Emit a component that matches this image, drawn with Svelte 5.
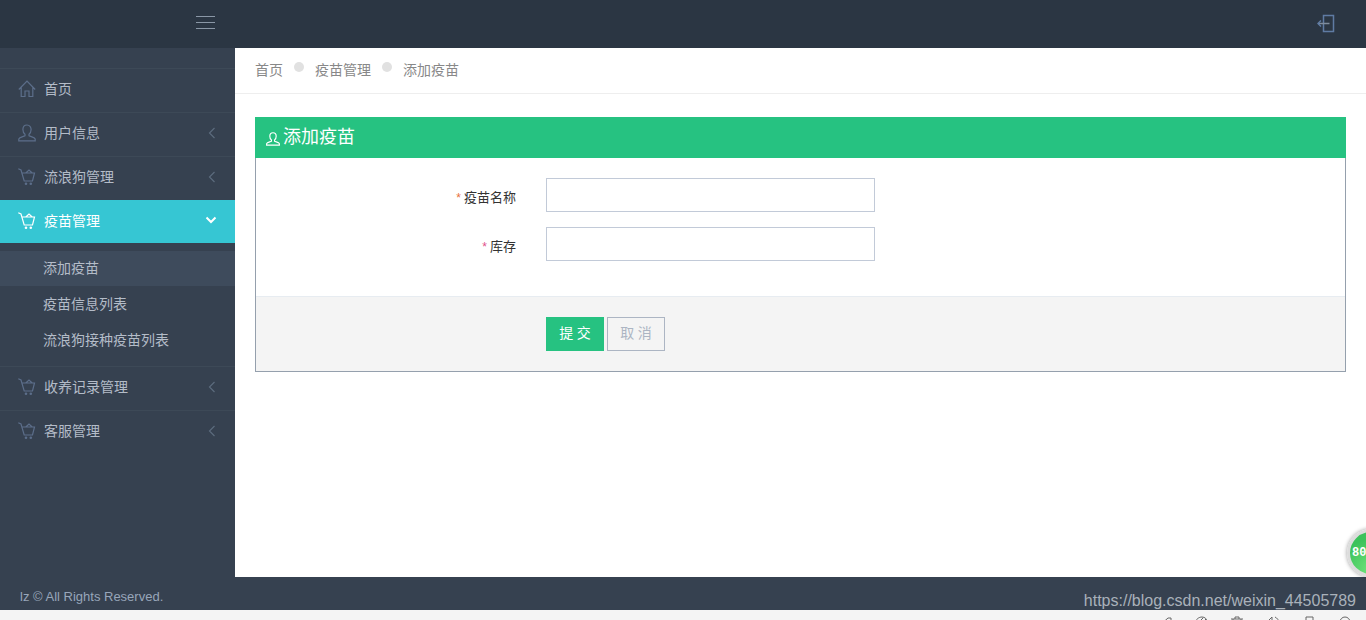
<script>
  const menu = [
    { label: "首页", icon: "home" },
    { label: "用户信息", icon: "user", arrow: true },
    { label: "流浪狗管理", icon: "cart", arrow: true },
    {
      label: "疫苗管理",
      icon: "cart",
      open: true,
      children: ["添加疫苗", "疫苗信息列表", "流浪狗接种疫苗列表"],
    },
    { label: "收养记录管理", icon: "cart", arrow: true },
    { label: "客服管理", icon: "cart", arrow: true },
  ];
</script>

{#snippet icon(name)}
  <svg class="icon" viewBox="0 0 18 18" width="18" height="18" fill="none" stroke="currentColor" stroke-width="1.200">
    {#if name === "home"}
      <path d="M0.800 9.500 9 1 17.200 9.500M3.200 7V16.500H7V11H11V16.500H14.800V7" />
    {:else if name === "user"}
      <path d="M9 1C6.400 1 4.900 3 4.900 5.600 4.900 7.900 5.800 9.400 7 10.300V11.800C5 12.800 1.400 13.200 0.800 15V16.800H17.200V15C16.600 13.200 13 12.800 11 11.800V10.300C12.200 9.400 13.100 7.900 13.100 5.600 13.100 3 11.600 1 9 1Z" />
    {:else}
      <path d="M0.300 0.800 3 2 6.200 13H14.500L16.500 5H4.300M7.800 5 11 2 14.200 5" />
      <circle cx="8" cy="15.800" r="1.300" fill="currentColor" stroke="none" />
      <circle cx="12.800" cy="15.800" r="1.300" fill="currentColor" stroke="none" />
    {/if}
  </svg>
{/snippet}

<div class="page">
  <header class="topbar">
    <div class="brand">
      <div class="burger"><i></i><i></i><i></i></div>
    </div>
    <svg class="logout" viewBox="0 0 20 20" width="20" height="20" fill="none" stroke-width="1.500">
      <path d="M6.500 1.500H16.500V17.500H6.500Z" stroke="#5f7ba3" />
      <path d="M1 9.500H12.500" stroke="#7f8c9c" />
      <path d="M4 6.500 1 9.500 4 12.500" stroke="#5f7ba3" />
    </svg>
  </header>

  <div class="body">
    <aside class="sidebar">
      <ul class="menu">
        {#each menu as item}
          <li class="item" class:open={item.open}>
            <div class="link">
              {@render icon(item.icon)}
              <span class="title">{item.label}</span>
              {#if item.arrow}
                <svg class="arrow" viewBox="0 0 8 12" width="8" height="12" fill="none" stroke="currentColor" stroke-width="1.200"><path d="M6.500 1 1.500 6 6.500 11" /></svg>
              {:else if item.open}
                <svg class="arrow down" viewBox="0 0 12 8" width="12" height="8" fill="none" stroke="currentColor" stroke-width="2"><path d="M1.500 1.500 6 6 10.500 1.500" /></svg>
              {/if}
            </div>
            {#if item.children}
              <ul class="sub">
                {#each item.children as child, i}
                  <li class:current={i === 0}>{child}</li>
                {/each}
              </ul>
            {/if}
          </li>
        {/each}
      </ul>
    </aside>

    <main class="content">
      <nav class="crumbs">
        <span>首页</span><b class="dot"></b>
        <span>疫苗管理</span><b class="dot"></b>
        <span>添加疫苗</span>
      </nav>

      <section class="panel">
        <h2 class="panel-title">
          <svg viewBox="0 0 18 18" width="14" height="14" fill="none" stroke="currentColor" stroke-width="1.500">
            <path d="M9 1C6.400 1 4.900 3 4.900 5.600 4.900 7.900 5.800 9.400 7 10.300V11.800C5 12.800 1.400 13.200 0.800 15V16.800H17.200V15C16.600 13.200 13 12.800 11 11.800V10.300C12.200 9.400 13.100 7.900 13.100 5.600 13.100 3 11.600 1 9 1Z" />
          </svg>
          添加疫苗
        </h2>
        <form class="form">
          <div class="row">
            <label for="vname"><em class="orange">*</em>疫苗名称</label>
            <input id="vname" type="text" />
          </div>
          <div class="row">
            <label for="stock"><em>*</em>库存</label>
            <input id="stock" type="text" />
          </div>
        </form>
        <div class="actions">
          <button class="submit" type="button">提 交</button>
          <button class="cancel" type="button">取 消</button>
        </div>
      </section>
    </main>
  </div>

  <footer class="footer">
    <span class="copy">lz © All Rights Reserved.</span>
    <span class="mark">https://blog.csdn.net/weixin_44505789</span>
  </footer>
  <div class="strip">
    <svg viewBox="0 0 14 14" width="14" height="14"><path d="M1 10 10 2H13V12M6 6V14" /></svg>
    <svg viewBox="0 0 14 14" width="14" height="14"><path d="M1 7C2 3 5 1 8 1 11 1 13 3 13 6M5 6 9 2M8 7 12 3" /></svg>
    <svg viewBox="0 0 14 14" width="14" height="14"><path d="M1 3H13M5 3V1H9V3M3 3V14M11 3V14" /></svg>
    <svg viewBox="0 0 14 14" width="14" height="14"><path d="M1 6 6 1V14M9 1 C11 2 13 4 13 7" /></svg>
    <svg viewBox="0 0 14 14" width="14" height="14"><path d="M4 1H11V14M4 1V14M0 6H4" /></svg>
    <svg viewBox="0 0 14 14" width="14" height="14"><circle cx="7" cy="6" r="5" /></svg>
  </div>

  <div class="ball"><span>80</span></div>
</div>

<style>
  :global(body) {
    margin: 0;
    background: #fff;
    overflow: hidden;
  }

  .page {
    height: 620px;
    display: flex;
    flex-direction: column;
    font-family: "Open Sans", "Liberation Sans", "Noto Sans CJK SC", sans-serif;
    font-size: 14px;
    position: relative;
    overflow: hidden;
  }

  .topbar {
    height: 48px;
    flex: none;
    background: #2b3643;
    display: flex;
    align-items: center;
    justify-content: space-between;
    padding-right: 29px;
  }

  .brand {
    width: 235px;
    display: flex;
    justify-content: flex-end;
    padding-bottom: 3px;
  }

  .burger {
    width: 19px;
    margin-right: 20px;
    display: flex;
    flex-direction: column;
    gap: 5px;
  }

  .burger i {
    display: block;
    height: 1px;
    background: #8a97a6;
  }

  .body {
    flex: 1;
    display: flex;
    min-height: 0;
  }

  .sidebar {
    width: 235px;
    flex: none;
    background: #364150;
    padding-top: 20px;
  }

  .menu,
  .sub {
    list-style: none;
    margin: 0;
    padding: 0;
  }

  .item {
    border-top: 1px solid #3d4957;
  }

  .link {
    height: 43px;
    box-sizing: border-box;
    display: flex;
    align-items: center;
    padding: 0 17px 3px 18px;
    color: #b4bcc8;
    font-size: 14px;
  }

  .icon {
    color: #5c6e8a;
    flex: none;
    margin: 0 8px 0 0;
  }

  .title {
    flex: 1;
    line-height: 1;
  }

  .arrow {
    color: #5c6b7d;
    margin-right: 2px;
  }

  .open {
    border-top: none;
  }

  .open .link {
    background: #36c6d3;
    color: #fff;
    padding-bottom: 2px;
  }

  .open .icon,
  .open .arrow {
    color: #fff;
  }

  .arrow.down {
    margin-right: 1px;
    margin-bottom: 2px;
  }

  .sub {
    padding: 8px 0 7px;
  }

  .sub li {
    height: 35px;
    box-sizing: border-box;
    line-height: 33px;
    margin-bottom: 1px;
    padding-left: 43px;
    color: #b4bcc8;
  }

  .sub li.current {
    background: #3e4b5c;
  }

  .content {
    flex: 1;
    background: #fff;
    min-width: 0;
  }

  .crumbs {
    height: 41px;
    padding: 0 0 4px 20px;
    border-bottom: 1px solid #eee;
    display: flex;
    align-items: center;
    color: #888;
    gap: 11px;
  }

  .dot {
    width: 10px;
    height: 10px;
    border-radius: 50%;
    background: #e1e1e1;
    margin-top: -3px;
  }

  .panel {
    margin: 23px 20px 0;
    border: 1px solid #95a0ad;
    border-top: none;
  }

  .panel-title {
    height: 41px;
    box-sizing: border-box;
    margin: 0 -1px;
    background: #26c281;
    color: #fff;
    font-size: 18px;
    font-weight: 400;
    display: flex;
    align-items: center;
    gap: 3px;
    padding: 0 0 6px 11px;
  }

  .panel-title svg {
    margin-top: 9px;
  }

  .form {
    padding: 20px 0 35px;
    display: flex;
    flex-direction: column;
    gap: 15px;
  }

  .row {
    display: flex;
    align-items: center;
  }

  .row label {
    width: 260px;
    text-align: right;
    font-size: 13px;
    color: #333;
    padding-top: 2px;
  }

  .row em {
    font: normal 12px "Liberation Sans", sans-serif;
    color: #e0508a;
    margin-right: 3px;
  }

  .row em.orange {
    color: #e8703a;
  }

  .row input {
    width: 329px;
    height: 34px;
    margin-left: 30px;
    box-sizing: border-box;
    border: 1px solid #c2cad8;
    background: #fff;
    padding: 6px 12px;
  }

  .actions {
    background: #f4f4f4;
    border-top: 1px solid #e7ecf1;
    padding: 20px 0 20px 290px;
    display: flex;
    gap: 3px;
  }

  .actions button {
    height: 34px;
    width: 58px;
    box-sizing: border-box;
    font: inherit;
    font-size: 14px;
    padding: 0 0 4px;
  }

  .submit {
    background: #26c281;
    border: 1px solid #26c281;
    color: #fff;
  }

  .cancel {
    background: transparent;
    border: 1px solid #acb5c3;
    color: #acb5c3;
  }

  .footer {
    height: 33px;
    flex: none;
    background: #364150;
    display: flex;
    align-items: center;
    justify-content: space-between;
    padding: 0 10px 0 20px;
    color: #98a6ba;
    font-family: "Liberation Sans", sans-serif;
  }

  .copy {
    font-size: 13px;
    margin-top: 5px;
  }

  .mark {
    font-size: 16px;
    color: #a9b1ba;
    margin-top: 14px;
  }

  .strip {
    height: 10px;
    flex: none;
    box-sizing: border-box;
    background: #f4f4f4;
    padding: 6px 14px 0 0;
    display: flex;
    justify-content: flex-end;
    gap: 22px;
    overflow: hidden;
  }

  .strip svg {
    flex: none;
    fill: none;
    stroke: #666;
    stroke-width: 1;
  }

  .ball {
    position: absolute;
    left: 1347px;
    top: 529px;
    width: 48px;
    height: 48px;
    box-sizing: border-box;
    border-radius: 50%;
    border: 3px solid #dcdcdc;
    background: radial-gradient(circle at 50% 90%, #6fe37a, #3cc25b 70%);
    box-shadow: 0 0 4px rgba(0, 0, 0, 0.4);
    color: #fff;
    font: bold 12px "Liberation Mono", monospace;
    display: flex;
    align-items: center;
    padding-left: 2px;
  }
</style>
